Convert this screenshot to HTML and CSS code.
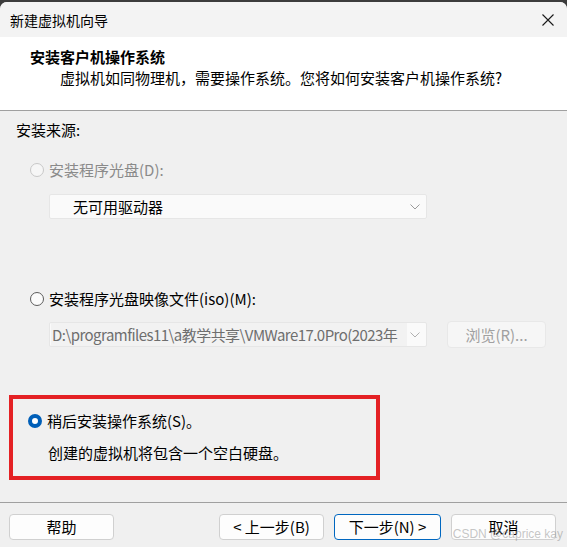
FILE: index.html
```html
<!DOCTYPE html>
<html lang="zh-CN">
<head>
<meta charset="utf-8">
<title>新建虚拟机向导</title>
<link rel="stylesheet" href="styles.css">
</head>
<body>
<div class="desk">
  <div class="window">
    <div class="titlebar">
      <span class="title">新建虚拟机向导</span>
      <svg class="close" width="12" height="12" viewBox="0 0 12 12"><path d="M0.5 0.5 L11.5 11.5 M11.5 0.5 L0.5 11.5" stroke="#1a1a1a" stroke-width="1.1" fill="none"/></svg>
    </div>
    <div class="header">
      <div class="h-title">安装客户机操作系统</div>
      <div class="h-sub">虚拟机如同物理机，需要操作系统。您将如何安装客户机操作系统?</div>
    </div>
    <div class="content">
      <div class="label">安装来源:</div>
      <div class="radio-row disabled row1">
        <span class="radio radio-disabled"></span>
        <span>安装程序光盘(D):</span>
      </div>
      <div class="select select1">
        <span class="select-text">无可用驱动器</span>
        <svg class="chev" width="10" height="6" viewBox="0 0 10 6"><path d="M0.5 0.5 L5 5 L9.5 0.5" stroke="#9a9a9a" stroke-width="1" fill="none"/></svg>
      </div>
      <div class="radio-row row2">
        <span class="radio"></span>
        <span>安装程序光盘映像文件(iso)(M):</span>
      </div>
      <div class="iso-row">
        <div class="select select2">
          <span class="select-text2">D:\programfiles11\a教学共享\VMWare17.0Pro(2023年</span>
          <svg class="chev" width="10" height="6" viewBox="0 0 10 6"><path d="M0.5 0.5 L5 5 L9.5 0.5" stroke="#b0b0b0" stroke-width="1" fill="none"/></svg>
        </div>
        <div class="btn btn-disabled browse">浏览(R)...</div>
      </div>
      <div class="highlight">
        <div class="radio-row row3">
          <span class="radio radio-checked"></span>
          <span>稍后安装操作系统(S)。</span>
        </div>
        <div class="desc">创建的虚拟机将包含一个空白硬盘。</div>
      </div>
    </div>
    <div class="footer">
      <div class="btn">帮助</div>
      <div class="spacer"></div>
      <div class="btn">&lt; 上一步(B)</div>
      <div class="btn btn-primary">下一步(N) &gt;</div>
      <div class="btn">取消</div>
      <div class="watermark">CSDN @caprice kay</div>
    </div>
  </div>
</div>
</body>
</html>
```

FILE: styles.css
```css
* { box-sizing: border-box; }
html, body {
  margin: 0;
  padding: 0;
  width: 567px;
  height: 547px;
  overflow: hidden;
}
body {
  font-family: "Noto Sans CJK SC", "Noto Sans", sans-serif;
  font-size: 15px;
  color: #000;
  background: #3c3c3c;
}
.desk {
  padding-top: 2px;
  height: 547px;
}
.window {
  height: 545px;
  background: #f0f0f0;
  border-radius: 7px 7px 0 0;
  overflow: hidden;
  position: relative;
}
.titlebar {
  height: 35px;
  background: #f3f3f3;
  display: flex;
  align-items: center;
  justify-content: space-between;
  padding: 0 13px 0 10px;
}
.title {
  font-size: 14px;
  line-height: 20px;
  color: #000;
}
.close { display: block; }
.header {
  height: 74px;
  background: #fff;
  padding-top: 10px;
  border-bottom: 1px solid #a0a0a0;
}
.h-title {
  font-weight: bold;
  line-height: 20px;
  padding-left: 30px;
}
.h-sub {
  line-height: 21px;
  padding-left: 60px;
}
.content {
  height: 392px;
  padding-top: 9px;
  border-bottom: 1px solid #a0a0a0;
}
.label {
  line-height: 20px;
  padding-left: 16px;
}
.radio-row {
  display: flex;
  align-items: center;
  gap: 5px;
  line-height: 20px;
  padding-left: 30px;
}
.row1 { margin-top: 20px; }
.row2 { margin-top: 70px; }
.disabled { color: #8a8a8a; }
.radio {
  width: 14px;
  height: 14px;
  border-radius: 50%;
  border: 1px solid #5c5c5c;
  background: #fbfbfb;
  flex: none;
}
.radio-disabled {
  border-color: #c8c8c8;
  background: #f6f6f6;
}
.radio-checked {
  border: 4.5px solid #005fb8;
  background: #fff;
}
.select {
  display: flex;
  align-items: center;
  justify-content: space-between;
  height: 25px;
  background: #fafafa;
  border: 1px solid #e6e6e6;
  border-radius: 2px;
}
.select1 {
  margin: 14px 0 0 49px;
  width: 378px;
  padding: 0 6px 0 23px;
}
.select-text { line-height: 20px; }
.iso-row {
  display: flex;
  align-items: center;
  margin-top: 12px;
  padding-left: 49px;
  gap: 20px;
}
.select2 {
  width: 378px;
  padding: 0 6px 0 1px;
  background: #fafafa;
}
.select-text2 {
  color: #6e6e6e;
  background: #f2f2f2;
  line-height: 23px;
  width: 356px;
  overflow: hidden;
  white-space: nowrap;
  padding-left: 1px;
  letter-spacing: -0.55px;
}
.btn {
  width: 105px;
  height: 26px;
  border: 1px solid #d0d0d0;
  border-radius: 4px;
  background: #fdfdfd;
  display: flex;
  align-items: center;
  justify-content: center;
  line-height: 20px;
  flex: none;
}
.btn-disabled {
  background: #f6f6f6;
  border-color: #e8e8e8;
  color: #a0a0a0;
}
.browse {
  width: 99px;
  height: 27px;
}
.btn-primary {
  border-color: #0067c0;
  width: 107px;
}
.highlight {
  margin: 47px 0 0 9px;
  width: 371px;
  height: 85px;
  border: 4px solid #e42124;
  padding-top: 12px;
}
.row3 {
  padding-left: 15px;
}
.desc {
  margin-top: 12px;
  padding-left: 35px;
  line-height: 20px;
}
.footer {
  display: flex;
  align-items: center;
  gap: 10px;
  padding: 11px 11px 0 9px;
  position: relative;
}
.spacer { flex: 1; }
.watermark {
  position: absolute;
  right: 4px;
  top: 24px;
  font-family: "Liberation Sans", sans-serif;
  font-size: 12px;
  color: rgba(150, 150, 150, 0.55);
}
```
